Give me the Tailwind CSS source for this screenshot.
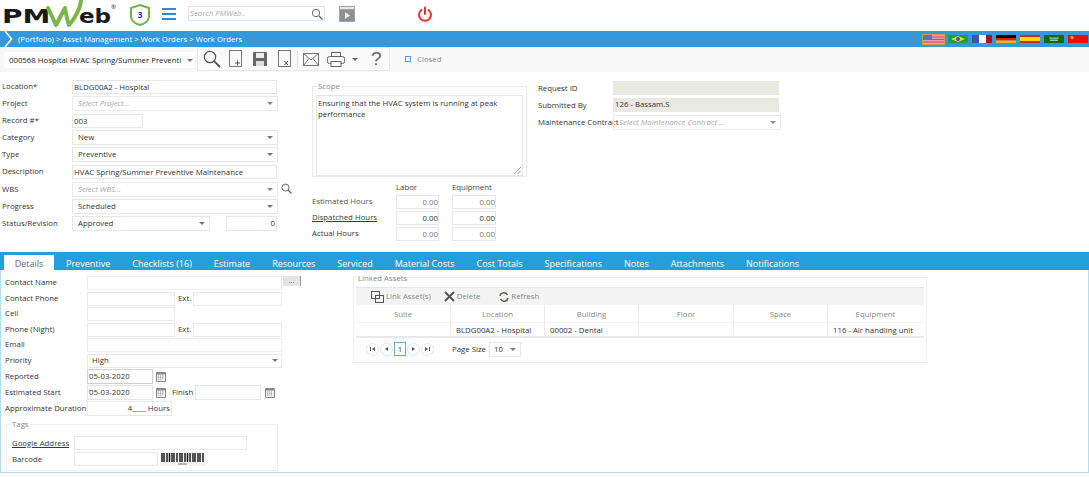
<!DOCTYPE html>
<html lang="en">
<head>
<meta charset="UTF-8">
<title>PMWeb Work Orders</title>
<script src="https://cdn.jsdelivr.net/npm/@tailwindcss/browser@4"></script>
</head>
<body class="bg-white font-['Open_Sans',sans-serif] text-[7.8px] leading-[13px] text-[#333]">
<div class="w-[1089px] h-[477px] overflow-hidden">

	<!-- header -->
	<div class="h-[31px] flex items-start relative">
		<div class="relative w-[125px] h-[31px]">
			<span class="absolute left-[2px] top-[4px] font-['DejaVu_Sans',sans-serif] font-bold text-[20px] leading-[24px] text-[#1a1a1a] origin-left scale-x-[1.4]">PM</span>
			<span class="absolute left-[79px] top-[4px] font-['DejaVu_Sans',sans-serif] font-bold text-[20px] leading-[24px] text-[#1a1a1a] origin-left scale-x-[1.15]">eb</span>
			<span class="absolute left-[111px] top-[3px] text-[6px] leading-[8px] text-[#1a1a1a]">®</span>
			<svg class="absolute left-[44px] top-0" width="42" height="29" viewBox="0 0 42 29" fill="none" stroke="#7ab648" stroke-linecap="round" stroke-linejoin="round"><path d="M4 8 C7 14 9 19 12 25 C15 20 18 13 21 8 C22 14 23 20 25 25 C30 20 36 9 37 1" stroke-width="4"/></svg>
		</div>
		<svg class="ml-[4px] mt-[3px]" width="22" height="24" viewBox="0 0 22 24" fill="#fff" stroke="#6fb24a" stroke-width="2"><path d="M11 2 L20 5 V13 C20 18 15 21 11 22 C7 21 2 18 2 13 V5 Z"/><text x="11" y="15" text-anchor="middle" font-size="8" font-weight="700" fill="#2222cc" stroke="none" font-family="Open Sans">3</text></svg>
		<div class="ml-[11px] mt-[8px] w-[14px] flex flex-col gap-[3px]"><div class="h-[2px] bg-[#3a87c8]"></div><div class="h-[2px] bg-[#3a87c8]"></div><div class="h-[2px] bg-[#3a87c8]"></div></div>
		<div class="ml-[12px] mt-[6px] w-[137px] h-[15px] border border-[#e4e4e4] flex items-center justify-between pl-[1px] pr-[1px]">
			<span class="italic text-[#aaa]">Search PMWeb..</span>
			<svg width="12" height="12" viewBox="0 0 12 12" fill="none" stroke="#666"><circle cx="5" cy="5" r="3.700"/><path d="M8 8 L11.500 11.500" stroke-width="1.300"/></svg>
		</div>
		<svg class="ml-[14px] mt-[6px]" width="16" height="16" viewBox="0 0 16 16"><rect width="16" height="16" fill="#a3a3a3"/><rect x="1" y="1" width="14" height="2" fill="#e8e8e8"/><rect x="1" y="4" width="14" height="11" fill="#8f8f8f"/><path d="M6 6 L11 9.500 L6 13 Z" fill="#eee"/></svg>
		<svg class="ml-[62px] mt-[6px]" width="16" height="16" viewBox="0 0 16 16" fill="none" stroke="#e0332b" stroke-width="2" stroke-linecap="round"><path d="M4.500 4 A6 6 0 1 0 11.500 4"/><path d="M8 1.500 V8"/></svg>
	</div>

	<!-- breadcrumb -->
	<div class="h-[16px] bg-[#3498db] flex items-center text-white relative">
		<svg class="ml-[4px]" width="9" height="16" viewBox="0 0 9 16" fill="none" stroke="#fff" stroke-width="1.600"><path d="M1 0 L7.500 8 L1 16"/></svg>
		<span class="ml-[5px] whitespace-nowrap">(Portfolio) &gt; Asset Management &gt; Work Orders &gt; Work Orders</span>
		<div class="ml-auto flex items-center gap-[4px] mr-[1px]">
			<svg class="outline outline-[#d79a3f]" width="21" height="9" viewBox="0 0 21 9"><rect width="21" height="9" fill="#e8a0a8"/><path d="M0 2H21M0 4.500H21M0 7H21" stroke="#c9485c"/><rect width="9" height="4.500" fill="#5a72b8"/></svg>
			<svg width="20" height="8" viewBox="0 0 20 8"><rect width="20" height="8" fill="#229a49"/><path d="M10 1 L17 4 L10 7 L3 4 Z" fill="#e6d92c"/><circle cx="10" cy="4" r="2" fill="#3b5ba5"/></svg>
			<svg width="20" height="8" viewBox="0 0 20 8"><rect width="7" height="8" fill="#3f57a6"/><rect x="7" width="7" height="8" fill="#fff"/><rect x="14" width="6" height="8" fill="#a80f36"/></svg>
			<svg width="20" height="8" viewBox="0 0 20 8"><rect width="20" height="3" fill="#000"/><rect y="3" width="20" height="2.500" fill="#dd1c1c"/><rect y="5.500" width="20" height="2.500" fill="#f5b50a"/></svg>
			<svg width="20" height="8" viewBox="0 0 20 8"><rect width="20" height="8" fill="#d8262e"/><rect y="2" width="20" height="4" fill="#f6d80f"/></svg>
			<svg width="20" height="8" viewBox="0 0 20 8"><rect width="20" height="8" fill="#0b6a0b"/><path d="M5 3H15M6 4H14M6 5.500H14" stroke="#9cc79c"/></svg>
			<svg width="20" height="8" viewBox="0 0 20 8"><rect width="20" height="8" fill="#f40a0a"/><circle cx="4" cy="2.500" r="1.500" fill="#f0c020"/></svg>
		</div>
	</div>

	<!-- toolbar -->
	<div class="h-[25px] bg-[#f8f8f8] flex items-start">
		<div class="ml-[4px] mt-[5px] w-[191px] h-[16px] bg-white flex items-center justify-between pl-[5px] pr-[2px] text-[#222] whitespace-nowrap">
			<span>000568 Hospital HVAC Spring/Summer Preventi</span>
			<span class="w-0 h-0 border-x-[3px] border-x-transparent border-t-[3px] border-t-[#777]"></span>
		</div>
		<div class="ml-[2px] w-[193px] h-[24px] border border-[#e8e8e8] bg-[#fafafa] flex items-center relative">
			<svg class="ml-[5px]" width="18" height="18" viewBox="0 0 18 18" fill="none" stroke="#555"><circle cx="7" cy="7" r="5.700" stroke-width="1.200"/><path d="M11 11 L17 17" stroke-width="1.800"/></svg>
			<svg class="ml-[8px]" width="14" height="18" viewBox="0 0 14 18" fill="none" stroke="#777"><rect x=".5" y=".5" width="12" height="16"/><path d="M6 13H11M8.500 10.500V15.500" stroke="#555"/></svg>
			<svg class="ml-[10px]" width="14" height="14" viewBox="0 0 14 14"><rect width="14" height="14" rx="1" fill="#666"/><rect x="3" y="1" width="8" height="5" fill="#eee"/><rect x="3" y="9" width="8" height="5" fill="#ddd"/></svg>
			<svg class="ml-[11px]" width="14" height="18" viewBox="0 0 14 18" fill="none" stroke="#777"><rect x=".5" y=".5" width="12" height="16"/><path d="M6.500 11 L10 15M10 11 L6.500 15" stroke="#444"/></svg>
			<div class="ml-[5px] w-px h-[17px] bg-[#ddd]"></div>
			<svg class="ml-[5px]" width="16" height="13" viewBox="0 0 16 13" fill="none" stroke="#777"><rect x=".5" y=".5" width="15" height="12"/><path d="M.5 .5 L8 7 L15.500 .5M.5 12.500 L6 5.500M15.500 12.500 L10 5.500"/></svg>
			<svg class="ml-[8px]" width="18" height="15" viewBox="0 0 18 15" fill="none" stroke="#666"><rect x="4.500" y=".5" width="9" height="4"/><rect x=".5" y="4.500" width="17" height="7" rx="2"/><rect x="4" y="9.500" width="10" height="5" fill="#fff"/></svg>
			<span class="ml-[7px] w-0 h-0 border-x-[3px] border-x-transparent border-t-[3px] border-t-[#666]"></span>
			<span class="ml-[13px] text-[19px] leading-[20px] text-[#666] font-['Liberation_Sans',sans-serif]">?</span>
		</div>
		<div class="ml-[15px] mt-[9px] w-[6px] h-[6px] border border-[#5a9bd5]"></div>
		<span class="ml-[6px] mt-[6px] text-[#888]">Closed</span>
	</div>

	<!-- form top -->
	<div class="h-[180px] flex items-start">
		<div class="w-[293px] pl-[2px] pt-[7px] flex flex-col gap-[2px]">
			<div class="flex items-center h-[15px]"><span class="w-[70px]">Location*</span><div class="w-[205px] h-[14px] border border-[#e6e6e6] pl-[1px] leading-[12px]">BLDG00A2 - Hospital</div></div>
			<div class="flex items-center h-[15px]"><span class="w-[70px]">Project</span><div class="w-[206px] h-[15px] border border-[#eaeaea] pl-[5px] flex items-center justify-between pr-[4px] italic text-[#aaa]">Select Project...<span class="w-0 h-0 border-x-[3px] border-x-transparent border-t-[3px] border-t-[#888]"></span></div></div>
			<div class="flex items-center h-[15px]"><span class="w-[70px]">Record #*</span><div class="w-[71px] h-[14px] border border-[#e6e6e6] pl-[1px] leading-[12px]">003</div></div>
			<div class="flex items-center h-[15px]"><span class="w-[70px]">Category</span><div class="w-[206px] h-[15px] border border-[#e6e6e6] pl-[5px] flex items-center justify-between pr-[4px]">New<span class="w-0 h-0 border-x-[3px] border-x-transparent border-t-[3px] border-t-[#777]"></span></div></div>
			<div class="flex items-center h-[15px]"><span class="w-[70px]">Type</span><div class="w-[206px] h-[15px] border border-[#e6e6e6] pl-[5px] flex items-center justify-between pr-[4px]">Preventive<span class="w-0 h-0 border-x-[3px] border-x-transparent border-t-[3px] border-t-[#777]"></span></div></div>
			<div class="flex items-center h-[15px]"><span class="w-[70px]">Description</span><div class="w-[205px] h-[14px] border border-[#e6e6e6] pl-[1px] leading-[12px] whitespace-nowrap">HVAC Spring/Summer Preventive Maintenance</div></div>
			<div class="flex items-center h-[15px] mt-[1px]"><span class="w-[70px]">WBS</span><div class="w-[206px] h-[15px] border border-[#eaeaea] pl-[5px] flex items-center justify-between pr-[4px] italic text-[#aaa]">Select WBS...<span class="w-0 h-0 border-x-[3px] border-x-transparent border-t-[3px] border-t-[#888]"></span></div><svg class="ml-[3px] -mt-[2px]" width="11" height="11" viewBox="0 0 11 11" fill="none" stroke="#666"><circle cx="4.500" cy="4.500" r="3.500"/><path d="M7 7 L10.500 10.500" stroke-width="1.300"/></svg></div>
			<div class="flex items-center h-[15px]"><span class="w-[70px]">Progress</span><div class="w-[206px] h-[15px] border border-[#e6e6e6] pl-[5px] flex items-center justify-between pr-[4px]">Scheduled<span class="w-0 h-0 border-x-[3px] border-x-transparent border-t-[3px] border-t-[#777]"></span></div></div>
			<div class="flex items-center h-[15px]"><span class="w-[70px]">Status/Revision</span><div class="w-[138px] h-[15px] border border-[#e6e6e6] pl-[5px] flex items-center justify-between pr-[4px]">Approved<span class="w-0 h-0 border-x-[3px] border-x-transparent border-t-[3px] border-t-[#777]"></span></div><div class="ml-[16px] w-[51px] h-[15px] border border-[#e6e6e6] text-right pr-[1px]">0</div></div>
		</div>

		<div class="ml-[19px] w-[215px]">
			<div class="relative mt-[14px] h-[91px] border border-[#e8e8e8]">
				<span class="absolute left-[4px] -top-[7px] bg-white px-px text-[#888]">Scope</span>
				<div class="mt-[8px] ml-[3px] w-[207px] h-[81px] border border-[#e4e4e4] px-[1px] pt-[2px] leading-[11px] relative"><div class="w-[185px]">Ensuring that the HVAC system is running at peak performance</div>
					<svg class="absolute right-[1px] bottom-[1px]" width="7" height="7" viewBox="0 0 7 7" stroke="#999" fill="none"><path d="M0 7 L7 0M3.500 7 L7 3.500"/></svg>
				</div>
			</div>
			<div class="flex mt-[4px] h-[11px]"><span class="ml-[84px] w-[56px] text-[#444]">Labor</span><span class="text-[#444]">Equipment</span></div>
			<div class="flex items-center h-[15px] mt-[2px]"><span class="w-[84px] text-[#555]">Estimated Hours</span><div class="w-[43px] h-[14px] border border-[#e6e6e6] text-right text-[#777]">0.00</div><div class="ml-[13px] w-[44px] h-[14px] border border-[#e6e6e6] text-right text-[#777]">0.00</div></div>
			<div class="flex items-center h-[15px] mt-[1px]"><span class="w-[84px] underline text-[#2a3a55]">Dispatched Hours</span><div class="w-[43px] h-[14px] border border-[#e6e6e6] text-right">0.00</div><div class="ml-[13px] w-[44px] h-[14px] border border-[#e6e6e6] text-right">0.00</div></div>
			<div class="flex items-center h-[15px] mt-[1px]"><span class="w-[84px]">Actual Hours</span><div class="w-[43px] h-[14px] border border-[#e6e6e6] text-right text-[#777]">0.00</div><div class="ml-[13px] w-[44px] h-[14px] border border-[#e6e6e6] text-right text-[#777]">0.00</div></div>
		</div>

		<div class="ml-[11px] pt-[9px] flex flex-col gap-[3px]">
			<div class="flex items-center h-[14px]"><span class="w-[75px]">Request ID</span><div class="w-[166px] h-[14px] bg-[#e9e9e3]"></div></div>
			<div class="flex items-center h-[14px]"><span class="w-[75px]">Submitted By</span><div class="w-[166px] h-[14px] bg-[#e9e9e3] pl-[2px]">126 - Bassam.S</div></div>
			<div class="flex items-center h-[15px]"><span class="w-[75px] whitespace-nowrap">Maintenance Contract</span><div class="w-[168px] h-[15px] border border-[#eaeaea] pl-[5px] flex items-center justify-between pr-[4px] italic text-[#aaa]">Select Maintenance Contract ...<span class="w-0 h-0 border-x-[3px] border-x-transparent border-t-[3px] border-t-[#888]"></span></div></div>
		</div>
	</div>

	<!-- tabs -->
	<div class="h-[18px] bg-[#259fdc] flex items-end pl-[4px] text-[9px] text-white whitespace-nowrap">
		<div class="w-[50px] h-[15px] bg-white text-[#666] text-center leading-[17px]">Details</div>
		<div class="h-[15px] leading-[17px] flex">
			<span class="ml-[12px]">Preventive</span>
			<span class="ml-[22px]">Checklists (16)</span>
			<span class="ml-[22px]">Estimate</span>
			<span class="ml-[22px]">Resources</span>
			<span class="ml-[22px]">Serviced</span>
			<span class="ml-[22px]">Material Costs</span>
			<span class="ml-[22px]">Cost Totals</span>
			<span class="ml-[22px]">Specifications</span>
			<span class="ml-[22px]">Notes</span>
			<span class="ml-[22px]">Attachments</span>
			<span class="ml-[22px]">Notifications</span>
		</div>
	</div>

	<!-- details panel -->
	<div class="h-[203px] border border-t-0 border-[#b5dcee] flex items-start">
		<div class="w-[352px] pl-[4px] pt-[5px]">
			<div class="flex items-center h-[15px]"><span class="w-[82px]">Contact Name</span><div class="w-[195px] h-[14px] border border-[#eeeeee]"></div><div class="ml-px w-[18px] h-[10px] -mt-[3px] bg-[#e4e4e4] border-r border-[#999] text-center leading-[8px] text-[#666]">...</div></div>
			<div class="flex items-center h-[15px] mt-px"><span class="w-[82px]">Contact Phone</span><div class="w-[88px] h-[14px] border border-[#e8e8e8]"></div><span class="ml-[3px] w-[15px]">Ext.</span><div class="w-[89px] h-[14px] border border-[#e8e8e8]"></div></div>
			<div class="flex items-center h-[15px]"><span class="w-[82px]">Cell</span><div class="w-[88px] h-[14px] border border-[#e8e8e8]"></div></div>
			<div class="flex items-center h-[15px] mt-px"><span class="w-[82px]">Phone (Night)</span><div class="w-[88px] h-[14px] border border-[#e8e8e8]"></div><span class="ml-[3px] w-[15px]">Ext.</span><div class="w-[89px] h-[14px] border border-[#e8e8e8]"></div></div>
			<div class="flex items-center h-[15px]"><span class="w-[82px]">Email</span><div class="w-[195px] h-[14px] border border-[#eeeeee]"></div></div>
			<div class="flex items-center h-[15px] mt-px"><span class="w-[82px]">Priority</span><div class="w-[195px] h-[14px] border border-[#e8e8e8] pl-[4px] flex items-center justify-between pr-[3px]">High<span class="w-0 h-0 border-x-[3px] border-x-transparent border-t-[3px] border-t-[#777]"></span></div></div>
			<div class="flex items-center h-[15px] mt-px"><span class="w-[82px]">Reported</span><div class="w-[66px] h-[15px] border border-[#cfcfcf] pl-[1px]">05-03-2020</div><svg class="ml-[3px]" width="10" height="10" viewBox="0 0 10 10"><rect width="10" height="10" rx="1" fill="#888"/><rect x="1" y="2.500" width="8" height="6.500" fill="#eee"/><path d="M2 4H8M2 5.500H8M2 7H8" stroke="#999" stroke-dasharray="1 1"/></svg></div>
			<div class="flex items-center h-[15px] mt-px"><span class="w-[82px]">Estimated Start</span><div class="w-[66px] h-[15px] border border-[#e4e4e4] pl-[1px]">05-03-2020</div><svg class="ml-[3px]" width="10" height="10" viewBox="0 0 10 10"><rect width="10" height="10" rx="1" fill="#888"/><rect x="1" y="2.500" width="8" height="6.500" fill="#eee"/><path d="M2 4H8M2 5.500H8M2 7H8" stroke="#999" stroke-dasharray="1 1"/></svg><span class="ml-[6px] w-[23px]">Finish</span><div class="w-[66px] h-[15px] border border-[#e4e4e4]"></div><svg class="ml-[4px]" width="10" height="10" viewBox="0 0 10 10"><rect width="10" height="10" rx="1" fill="#888"/><rect x="1" y="2.500" width="8" height="6.500" fill="#eee"/><path d="M2 4H8M2 5.500H8M2 7H8" stroke="#999" stroke-dasharray="1 1"/></svg></div>
			<div class="flex items-center h-[15px] mt-px"><span class="w-[82px] whitespace-nowrap">Approximate Duration</span><div class="w-[85px] h-[15px] border border-[#e8e8e8] text-right pr-px whitespace-nowrap">4____ Hours</div></div>
			<div class="relative mt-[8px] ml-[1px] w-[272px] h-[47px] border border-[#eeeeee]">
				<span class="absolute left-[4px] -top-[7px] bg-white px-px text-[#888]">Tags</span>
				<div class="flex items-center h-[14px] mt-[11px] pl-[5px]"><span class="w-[62px] underline text-[#2a3a55] whitespace-nowrap">Google Address</span><div class="w-[173px] h-[14px] border border-[#e8e8e8]"></div></div>
				<div class="flex items-center h-[14px] mt-[2px] pl-[5px]"><span class="w-[62px]">Barcode</span><div class="w-[84px] h-[14px] border border-[#e8e8e8]"></div><svg class="ml-[2px]" width="46" height="14" viewBox="0 0 46 14"><rect width="46" height="14" fill="#f4f4f4"/><path d="M2 1V10M4 1V10M7 1V10M9.500 1V10M12 1V10M14 1V10M17 1V10M20 1V10M22 1V10M25 1V10M27.500 1V10M30 1V10M33 1V10M35 1V10M38 1V10M40 1V10M43 1V10" stroke="#111" stroke-width="1.400"/><path d="M18 12H27" stroke="#777"/></svg></div>
			</div>
		</div>

		<div class="relative mt-[7px] w-[574px] h-[86px] border border-[#eeeeee] px-[2px] pt-[9px]">
			<span class="absolute left-[3px] -top-[6px] bg-white px-px text-[#888]">Linked Assets</span>
			<div class="h-[18px] bg-[#f3f3f3] border-t border-[#e4e4e4] flex items-center pl-[15px] text-[#888]">
				<svg width="13" height="12" viewBox="0 0 13 12" fill="none" stroke="#555"><rect x=".5" y=".5" width="8" height="7"/><rect x="4.500" y="4.500" width="8" height="7"/></svg>
				<span class="ml-[2px]">Link Asset(s)</span>
				<svg class="ml-[13px]" width="11" height="11" viewBox="0 0 11 11" stroke="#555" stroke-width="2"><path d="M1 1 L10 10M10 1 L1 10"/></svg>
				<span class="ml-[2px]">Delete</span>
				<svg class="ml-[19px]" width="10" height="10" viewBox="0 0 10 10" fill="none" stroke="#666" stroke-width="1.600"><path d="M1 4 A4 4 0 0 1 8.500 3M9 6 A4 4 0 0 1 1.500 7"/></svg>
				<span class="ml-[2px]">Refresh</span>
			</div>
			<div class="grid grid-cols-[94px_94px_94px_95px_94px_96px] h-[17px] text-center text-[#888] leading-[19px]">
				<div>Suite</div><div class="border-l border-[#eaeaea]">Location</div><div class="border-l border-[#eaeaea]">Building</div><div class="border-l border-[#eaeaea]">Floor</div><div class="border-l border-[#eaeaea]">Space</div><div class="border-l border-[#eaeaea]">Equipment</div>
			</div>
			<div class="grid grid-cols-[94px_94px_94px_95px_94px_96px] h-[16px] leading-[15px] border-t border-[#f2f2f2] border-b-2 border-b-[#e8e8e8] whitespace-nowrap">
				<div></div><div class="border-l border-[#eaeaea] pl-[5px]">BLDG00A2 - Hospital</div><div class="border-l border-[#eaeaea] pl-[5px]">00002 - Dental</div><div class="border-l border-[#eaeaea]"></div><div class="border-l border-[#eaeaea]"></div><div class="border-l border-[#eaeaea] pl-[5px]">116 - Air handling unit</div>
			</div>
			<div class="flex items-center h-[22px] pl-[10px]">
				<div class="w-[13px] h-[13px] rounded-full border border-[#e4e4e4] flex items-center justify-center gap-px"><span class="w-px h-[4px] bg-[#555]"></span><span class="border-y-[2px] border-y-transparent border-r-[3px] border-r-[#555]"></span></div>
				<div class="w-[13px] h-[13px] ml-px rounded-full border border-[#e4e4e4] flex items-center justify-center"><span class="border-y-[2px] border-y-transparent border-r-[3px] border-r-[#555]"></span></div>
				<div class="w-[12px] h-[14px] ml-px border border-[#6aa5d6] text-center">1</div>
				<div class="w-[13px] h-[13px] ml-px rounded-full border border-[#e4e4e4] flex items-center justify-center"><span class="border-y-[2px] border-y-transparent border-l-[3px] border-l-[#555]"></span></div>
				<div class="w-[13px] h-[13px] ml-px rounded-full border border-[#e4e4e4] flex items-center justify-center gap-px"><span class="border-y-[2px] border-y-transparent border-l-[3px] border-l-[#555]"></span><span class="w-px h-[4px] bg-[#555]"></span></div>
				<span class="ml-[18px]">Page Size</span>
				<div class="ml-[3px] w-[32px] h-[15px] border border-[#e8e8e8] flex items-center justify-between px-[4px]">10<span class="w-0 h-0 border-x-[3px] border-x-transparent border-t-[3px] border-t-[#777]"></span></div>
			</div>
		</div>
	</div>
</div>
</body>
</html>
